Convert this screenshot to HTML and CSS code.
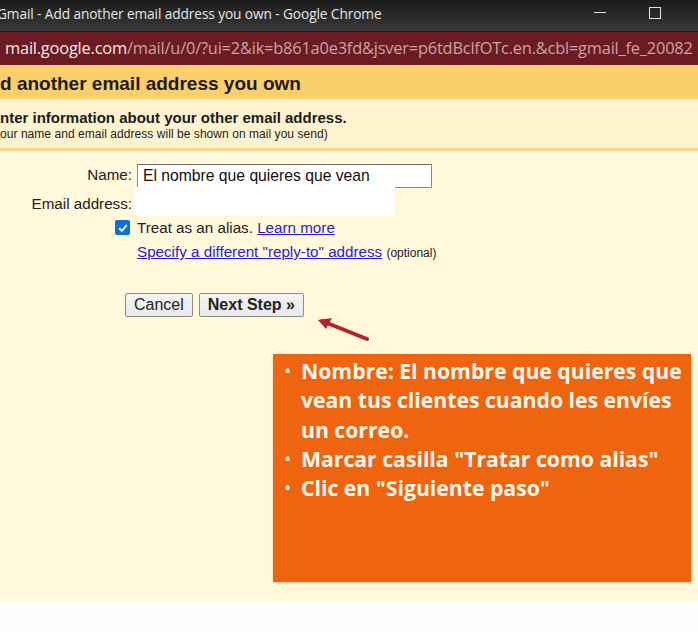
FILE: index.html
```html
<!DOCTYPE html>
<html>
<head>
<meta charset="utf-8">
<link rel="stylesheet" href="styles.css">
</head>
<body>
<div class="page">
  <div class="titlebar">
    <span class="title">Gmail - Add another email address you own - Google Chrome</span>
    <div class="controls">
      <span class="min"></span>
      <span class="max"></span>
    </div>
  </div>
  <div class="urlbar"><span class="host">mail.google.com</span><span class="path">/mail/u/0/?ui=2&amp;ik=b861a0e3fd&amp;jsver=p6tdBclfOTc.en.&amp;cbl=gmail_fe_20082</span></div>
  <div class="header">d another email address you own</div>
  <div class="sub">
    <div class="sub-title">nter information about your other email address.</div>
    <div class="sub-note">our name and email address will be shown on mail you send)</div>
  </div>
  <div class="main">
    <div class="form">
      <div class="label">Name:</div>
      <div class="field"><div class="input">El nombre que quieres que vean</div></div>
      <div class="label">Email address:</div>
      <div class="field"><div class="redact"></div></div>
      <div class="cb-cell"><span class="checkbox"><svg width="14" height="14" viewBox="0 0 14 14"><path d="M3.2 7.3 L5.8 9.8 L10.8 4.2" fill="none" stroke="#fff" stroke-width="2"/></svg></span></div>
      <div class="field text">Treat as an alias. <a class="link">Learn more</a></div>
      <div></div>
      <div class="field text"><a class="link">Specify a different "reply-to" address</a> <span class="opt">(optional)</span></div>
    </div>
    <div class="buttons">
      <button class="btn">Cancel</button>
      <button class="btn bold">Next Step »</button>
    </div>
    <div class="note">
      <ul>
        <li>Nombre: El nombre que quieres que vean tus clientes cuando les envíes un correo.</li>
        <li>Marcar casilla "Tratar como alias"</li>
        <li>Clic en "Siguiente paso"</li>
      </ul>
    </div>
    <svg class="arrow" width="60" height="30" viewBox="0 0 60 30">
      <path d="M51 22 L6 4" stroke="#b5222b" stroke-width="4" stroke-linecap="round" fill="none"/>
      <path d="M2 3 L16 1 L10 12 Z" fill="#b5222b"/>
    </svg>
  </div>
  <div class="footer"></div>
</div>
</body>
</html>
```
FILE: styles.css
```css
html, body {
  margin: 0;
  padding: 0;
}
body {
  width: 698px;
  height: 632px;
  overflow: hidden;
  font-family: "Liberation Sans", Arial, sans-serif;
}
.page {
  display: flex;
  flex-direction: column;
  height: 632px;
}
.titlebar {
  height: 31px;
  flex: none;
  background: linear-gradient(#1c1c1c, #383838);
  display: flex;
  align-items: center;
  justify-content: space-between;
  color: #e6e6e6;
  font-family: "Open Sans", sans-serif;
  font-size: 13.7px;
  white-space: nowrap;
}
.title {
  margin-left: -3px;
  margin-top: -5px;
  letter-spacing: -0.1px;
}
.controls {
  display: flex;
  align-items: center;
  gap: 43px;
  margin-right: 37px;
  margin-top: -6px;
}
.min {
  width: 12px;
  height: 1px;
  background: #e0e0e0;
}
.max {
  width: 10px;
  height: 10px;
  border: 1px solid #e0e0e0;
}
.urlbar {
  height: 34px;
  flex: none;
  box-sizing: border-box;
  border-top: 1px solid #3e0c10;
  background: #6b1b21;
  font-family: "Open Sans", sans-serif;
  font-size: 16.4px;
  line-height: 32px;
  padding-left: 5px;
  white-space: nowrap;
  overflow: hidden;
  letter-spacing: -0.2px;
}
.host { color: #f4eaea; }
.path { color: #c9a3a6; }
.header {
  height: 34px;
  flex: none;
  background: #fbcf69;
  font-weight: bold;
  font-size: 19px;
  line-height: 37px;
  color: #1b1b1b;
}
.sub {
  height: 52px;
  flex: none;
  background: #fff3cf;
  border-bottom: 3px solid #f8d98c;
  box-sizing: border-box;
  padding-top: 10px;
}
.sub-title {
  font-weight: bold;
  font-size: 15px;
  color: #1b1b1b;
  line-height: 18px;
}
.sub-note {
  font-size: 12px;
  color: #222;
  line-height: 14px;
  letter-spacing: 0.05px;
}
.main {
  position: relative;
  height: 450px;
  flex: none;
  background: #fff8da;
  padding-top: 13px;
  box-sizing: border-box;
}
.form {
  display: grid;
  grid-template-columns: 132px 300px;
  grid-template-rows: 29px 23px 24px 25px;
  column-gap: 5px;
  font-size: 15.2px;
  color: #222;
}
.label {
  text-align: right;
  line-height: 22px;
}
.field {
  position: relative;
}
.input {
  box-sizing: border-box;
  width: 295px;
  height: 24px;
  border: 1px solid #8a8a8a;
  border-top-color: #6a6a6a;
  background: #fff;
  font-size: 15.7px;
  line-height: 22px;
  padding-left: 5px;
  color: #111;
}
.redact {
  width: 261px;
  height: 29px;
  background: #fff;
  margin-left: -3px;
  margin-top: -6px;
}
.cb-cell {
  display: flex;
  justify-content: flex-end;
  padding-top: 4px;
  padding-right: 2px;
}
.checkbox {
  width: 15px;
  height: 15px;
  background: #0b6ee3;
  border-radius: 2px;
  display: flex;
  align-items: center;
  justify-content: center;
}
.text {
  line-height: 24px;
  white-space: nowrap;
}
.link {
  color: #2a1fcf;
  text-decoration: underline;
}
.opt {
  font-size: 12px;
  color: #222;
}
.buttons {
  display: flex;
  gap: 6px;
  margin-left: 125px;
  margin-top: 28px;
}
.btn {
  height: 24px;
  box-sizing: border-box;
  border: 1px solid #8e8e8e;
  border-radius: 2px;
  background: linear-gradient(#f4f4f4, #e9e9e9);
  font-family: "Liberation Sans", Arial, sans-serif;
  font-size: 16px;
  color: #222;
  padding: 0 8px;
  line-height: 20px;
}
.btn.bold {
  font-weight: bold;
  padding: 0 8px;
}
.note {
  margin-left: 273px;
  margin-top: 37px;
  width: 418px;
  height: 228px;
  background: #ef650f;
  box-shadow: 0 1px 2px rgba(150, 90, 20, 0.25);
  color: #fff8ef;
  font-family: "Open Sans", sans-serif;
  font-weight: bold;
  font-size: 21.2px;
  line-height: 29.3px;
  box-sizing: border-box;
  padding-top: 2px;
}
.note ul {
  margin: 0;
  padding: 0 4px 0 28px;
  list-style: none;
}
.note li {
  position: relative;
}
.note li::before {
  content: "•";
  position: absolute;
  left: -16px;
  font-size: 14px;
}
.arrow {
  position: absolute;
  left: 316px;
  top: 166px;
}
.footer {
  flex: 1;
  background: #fdfefc;
}
```
